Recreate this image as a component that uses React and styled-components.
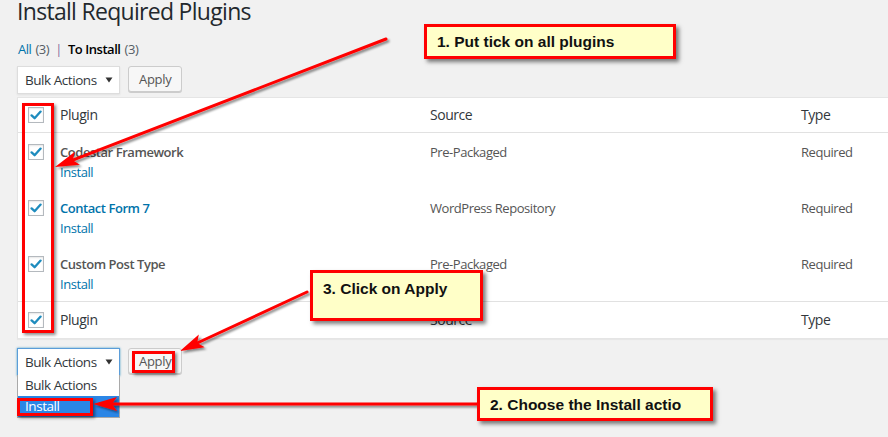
import React from "react";
import styled, { createGlobalStyle } from "styled-components";

const GlobalStyle = createGlobalStyle`
  html, body {
    margin: 0;
    padding: 0;
    background: #f1f1f1;
  }
  body {
    font-family: "Open Sans", "Noto Sans", sans-serif;
    overflow: hidden;
  }
`;

const Page = styled.div`
  position: relative;
  width: 888px;
  height: 437px;
  padding-left: 17px;
  box-sizing: border-box;
  background: #f1f1f1;
  overflow: hidden;
  color: #555;
`;

const Title = styled.h1`
  margin: 0;
  font-size: 23px;
  line-height: 23px;
  font-weight: 400;
  letter-spacing: -0.7px;
  color: #23282d;
`;

const SubNav = styled.div`
  margin-top: 16px;
  padding-left: 1px;
  font-size: 13px;
  line-height: 20px;
  letter-spacing: -0.45px;
  display: flex;
  gap: 4px;

  a {
    color: #0073aa;
    text-decoration: none;
  }
  b {
    color: #000;
    font-weight: 600;
  }
  span {
    color: #555d66;
  }
  i {
    font-style: normal;
    color: #8a6d9c;
    margin: 0 2px;
  }
`;

const TableNav = styled.div`
  display: flex;
  gap: 8px;
  margin-top: ${(p) => p.$top}px;
  align-items: flex-start;
`;

const SelectWrap = styled.div`
  position: relative;
  width: 103px;
`;

const SelectBox = styled.div`
  height: 28px;
  box-sizing: border-box;
  border: 1px solid ${(p) => (p.$focused ? "#5b9dd9" : "#ddd")};
  box-shadow: ${(p) => (p.$focused ? "0 0 2px rgba(30,140,190,.8)" : "0 1px 2px rgba(0,0,0,.07)")};
  background: #fff;
  display: flex;
  align-items: center;
  justify-content: space-between;
  padding: 0 6px 0 7px;
  font-size: 13.5px;
  letter-spacing: -0.45px;
  white-space: nowrap;
  color: #32373c;

  svg {
    margin-top: -1px;
  }
`;

const DropList = styled.div`
  position: absolute;
  left: 0;
  top: 27px;
  width: 103px;
  box-sizing: border-box;
  background: #fff;
  border: 1px solid #a9a9a9;
  border-top: none;
`;

const Option = styled.div`
  height: 21px;
  line-height: 21px;
  padding-left: 7px;
  font-size: 13.5px;
  letter-spacing: -0.45px;
  white-space: nowrap;
  color: ${(p) => (p.$active ? "#fff" : "#32373c")};
  background: ${(p) => (p.$active ? "#2b86e6" : "#fff")};
`;

const Button = styled.div`
  height: 26px;
  box-sizing: border-box;
  padding: 0 10px;
  border: 1px solid #ccc;
  border-radius: 3px;
  background: #f7f7f7;
  box-shadow: 0 1px 0 #ccc;
  font-size: 13px;
  letter-spacing: -0.3px;
  line-height: 24px;
  color: #555;
`;

const Table = styled.div`
  margin-top: 3px;
  width: 880px;
  background: #fff;
  border: 1px solid #e5e5e5;
  box-shadow: 0 1px 1px rgba(0, 0, 0, 0.04);
`;

const Row = styled.div`
  display: grid;
  grid-template-columns: 42px 370px 371px 1fr;
  align-items: ${(p) => (p.$head ? "center" : "start")};
  height: ${(p) => (p.$head ? (p.$line === "top" ? "37px" : "35px") : "56px")};
  box-sizing: border-box;
  padding-top: ${(p) => (p.$head ? "0" : "9px")};
  border-bottom: ${(p) => (p.$line === "bottom" ? "1px solid #e1e1e1" : "none")};
  border-top: ${(p) => (p.$line === "top" ? "1px solid #e1e1e1" : "none")};
  font-size: ${(p) => (p.$head ? "14px" : "13px")};
  letter-spacing: -0.45px;
  line-height: 20px;
  color: ${(p) => (p.$head ? "#32373c" : "#555")};
`;

const CheckCell = styled.div`
  padding-left: 10px;
  padding-top: ${(p) => (p.$head ? "0" : "2px")};
  display: flex;
`;

const Box = styled.div`
  width: 16px;
  height: 16px;
  box-sizing: border-box;
  border: 1px solid #b4b9be;
  background: #fff;
  box-shadow: inset 0 1px 2px rgba(0, 0, 0, 0.1);
  display: flex;
  align-items: center;
  justify-content: center;
`;

const Name = styled.div`
  font-weight: 600;
  color: ${(p) => (p.$link ? "#0073aa" : "#555")};
`;

const Action = styled.div`
  color: #0073aa;
`;

const Overlay = styled.div`
  position: absolute;
  inset: 0;
  z-index: 5;
  pointer-events: none;
`;

const Highlight = styled.div`
  position: absolute;
  left: ${(p) => p.$x}px;
  top: ${(p) => p.$y}px;
  width: ${(p) => p.$w}px;
  height: ${(p) => p.$h}px;
  box-sizing: border-box;
  border: 3px solid #ff0000;
  box-shadow: 2px 2px 3px rgba(0, 0, 0, 0.45);
`;

const Callout = styled.div`
  position: absolute;
  left: ${(p) => p.$x}px;
  top: ${(p) => p.$y}px;
  width: ${(p) => p.$w}px;
  height: ${(p) => p.$h}px;
  box-sizing: border-box;
  border: 3px solid #ff0000;
  background: #ffffc8;
  box-shadow: 3px 3px 4px rgba(0, 0, 0, 0.5);
  padding: ${(p) => p.$padTop}px 0 0 10px;
  font-family: "Liberation Sans", Arial, sans-serif;
  font-weight: 700;
  font-size: 15.5px;
  line-height: 18px;
  color: #111;
  white-space: nowrap;
  overflow: hidden;
`;

const Arrows = styled.svg`
  position: absolute;
  left: 0;
  top: 0;
`;

const Check = () => (
  <svg width="12" height="12" viewBox="0 0 12 12">
    <path d="M1.6 6.4 L4.6 9.2 L10.6 2.6" fill="none" stroke="#1e8cbe" strokeWidth="2.3" strokeLinecap="round" strokeLinejoin="round" />
  </svg>
);

const Caret = () => (
  <svg width="8" height="6" viewBox="0 0 8 6">
    <path d="M0.5 0.5 H7.5 L4 5.5 Z" fill="#333" />
  </svg>
);

function Arrow({ from, to }) {
  const [x1, y1] = from;
  const [x2, y2] = to;
  const dx = x2 - x1;
  const dy = y2 - y1;
  const len = Math.hypot(dx, dy);
  const ux = dx / len;
  const uy = dy / len;
  const px = -uy;
  const py = ux;
  const bx = x2 - ux * 24;
  const by = y2 - uy * 24;
  const nx = x2 - ux * 19;
  const ny = y2 - uy * 19;
  const pts = [
    [x2, y2],
    [bx + px * 7, by + py * 7],
    [nx, ny],
    [bx - px * 7, by - py * 7],
  ]
    .map((p) => p.join(","))
    .join(" ");
  return (
    <g filter="url(#shadow)">
      <line x1={x1} y1={y1} x2={nx} y2={ny} stroke="#ff0000" strokeWidth="3" strokeLinecap="round" />
      <polygon points={pts} fill="#ff0000" />
    </g>
  );
}

const plugins = [
  { name: "Codestar Framework", source: "Pre-Packaged", link: false },
  { name: "Contact Form 7", source: "WordPress Repository", link: true },
  { name: "Custom Post Type", source: "Pre-Packaged", link: false },
];

const HeadRow = ({ line }) => (
  <Row $head $line={line}>
    <CheckCell $head>
      <Box>
        <Check />
      </Box>
    </CheckCell>
    <div>Plugin</div>
    <div>Source</div>
    <div>Type</div>
  </Row>
);

export default function App() {
  return (
    <>
      <GlobalStyle />
      <Page>
        <Title>Install Required Plugins</Title>
        <SubNav>
          <a>All</a>
          <span>(3)</span>
          <i>|</i>
          <b>To Install</b>
          <span>(3)</span>
        </SubNav>
        <TableNav $top={7}>
          <SelectWrap>
            <SelectBox>
              Bulk Actions <Caret />
            </SelectBox>
          </SelectWrap>
          <Button>Apply</Button>
        </TableNav>

        <Table>
          <HeadRow line="bottom" />
          {plugins.map((p) => (
            <Row key={p.name}>
              <CheckCell>
                <Box>
                  <Check />
                </Box>
              </CheckCell>
              <div>
                <Name $link={p.link}>{p.name}</Name>
                <Action>Install</Action>
              </div>
              <div>{p.source}</div>
              <div>Required</div>
            </Row>
          ))}
          <HeadRow line="top" />
        </Table>

        <TableNav $top={9}>
          <SelectWrap>
            <SelectBox $focused>
              Bulk Actions <Caret />
            </SelectBox>
            <DropList>
              <Option>Bulk Actions</Option>
              <Option $active>Install</Option>
            </DropList>
          </SelectWrap>
          <Button>Apply</Button>
        </TableNav>

        <Overlay>
          <Highlight $x={22} $y={103} $w={32} $h={230} />
          <Highlight $x={132} $y={351} $w={43} $h={22} />
          <Highlight $x={17} $y={398} $w={76} $h={18} />
          <Arrows width="888" height="437">
            <defs>
              <filter id="shadow" x="-10%" y="-10%" width="130%" height="130%">
                <feDropShadow dx="2" dy="2" stdDeviation="1.2" floodColor="#000" floodOpacity="0.45" />
              </filter>
            </defs>
            <Arrow from={[386, 39]} to={[55, 167]} />
            <Arrow from={[307, 292]} to={[180, 351]} />
            <Arrow from={[477, 404]} to={[93, 404]} />
          </Arrows>
          <Callout $x={424} $y={24} $w={252} $h={35} $padTop={6}>
            1. Put tick on all plugins
          </Callout>
          <Callout $x={310} $y={270} $w={173} $h={51} $padTop={7}>
            3. Click on Apply
          </Callout>
          <Callout $x={477} $y={387} $w={236} $h={34} $padTop={6}>
            2. Choose the Install actio
          </Callout>
        </Overlay>
      </Page>
    </>
  );
}
